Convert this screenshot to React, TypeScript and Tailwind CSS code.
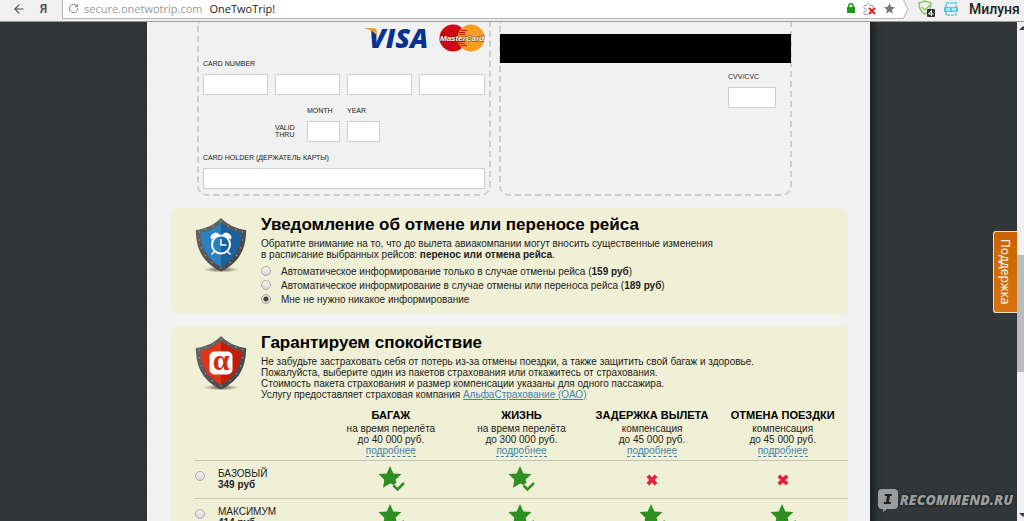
import { type ReactNode } from 'react'
import { ArrowLeft, RotateCw } from 'lucide-react'
import clsx from 'clsx'

interface Coverage {
  title: string
  lines: string[]
}

interface Plan {
  id: string
  name: string
  price: string
  covered: boolean[]
}

const coverages: Coverage[] = [
  { title: 'БАГАЖ', lines: ['на время перелёта', 'до 40 000 руб.'] },
  { title: 'ЖИЗНЬ', lines: ['на время перелёта', 'до 300 000 руб.'] },
  { title: 'ЗАДЕРЖКА ВЫЛЕТА', lines: ['компенсация', 'до 45 000 руб.'] },
  { title: 'ОТМЕНА ПОЕЗДКИ', lines: ['компенсация', 'до 45 000 руб.'] },
]

const plans: Plan[] = [
  { id: 'basic', name: 'БАЗОВЫЙ', price: '349 руб', covered: [true, true, false, false] },
  { id: 'max', name: 'МАКСИМУМ', price: '414 руб', covered: [true, true, true, true] },
]

const fieldClass = 'block w-full h-[21px] px-1 bg-white border border-[#cfcfcf] text-[11px] outline-none'
const labelClass = 'block text-[7px] leading-[8px] text-[#222]'
const radioClass =
  'appearance-none shrink-0 w-[10px] h-[10px] rounded-full border border-[#a9a9a9] bg-linear-to-b from-[#f4f4f4] to-[#d8d8d8] checked:bg-[radial-gradient(circle,#444_0_2px,#dedede_3px)]'

function VisaLogo() {
  return (
    <svg className="w-[68px] h-[28px] overflow-visible" viewBox="0 0 68 28" role="img" aria-label="Visa">
      <text x="6" y="24" className="font-['Open_Sans'] font-extrabold italic text-[27px]" fill="#0b3190">
        VISA
      </text>
      <path fill="#f79a1d" d="M2 4h8.500c1.500 0 2.300.7 2.600 2l1.400 7C12 8.500 8 6 2 4.600z" />
    </svg>
  )
}

function MasterCardLogo() {
  return (
    <svg className="w-[46px] h-[28px]" viewBox="0 0 46 28" role="img" aria-label="MasterCard">
      <circle cx="14" cy="14" r="13.500" fill="#cc0a12" />
      <circle cx="32" cy="14" r="13.500" fill="#f99d1c" />
      <path
        stroke="#cc0a12"
        strokeWidth="1"
        d="M22 6.500h6M20 8.500h6M20 10.500h6M19 17.500h7M20 19.500h6M22 21.500h6"
      />
      <text
        x="23"
        y="17"
        textAnchor="middle"
        className="font-['Liberation_Sans'] font-bold italic text-[8px]"
        fill="#fff"
        stroke="#6b1208"
        strokeWidth="0.800"
        paintOrder="stroke"
      >
        MasterCard
      </text>
    </svg>
  )
}

const studs: [number, number][] = [
  [26, 4.500], [18.500, 9], [11, 12.500], [4.500, 15], [4.500, 23], [6.500, 31], [10.500, 38.500], [17, 45.500], [26, 51],
  [33.500, 9], [41, 12.500], [47.500, 15], [47.500, 23], [45.500, 31], [41.500, 38.500], [35, 45.500],
]

function Shield({ tone, children }: { tone: 'blue' | 'red'; children: ReactNode }) {
  const [light, dark] = tone === 'blue' ? ['#2b80c0', '#19619d'] : ['#e0341a', '#c41c08']
  return (
    <svg className="shrink-0 w-[52px] h-[56px] mt-[2px]" viewBox="0 0 52 56" aria-hidden="true">
      <defs>
        <radialGradient id={`shade-${tone}`}>
          <stop offset="0" stopColor="#4a4634" stopOpacity="0.900" />
          <stop offset="1" stopColor="#4a4634" stopOpacity="0" />
        </radialGradient>
        <linearGradient id={`rim-${tone}`} x2="1" y2="1">
          <stop offset="0" stopColor="#6c6c6c" />
          <stop offset="1" stopColor="#3f3f42" />
        </linearGradient>
      </defs>
      <ellipse cx="26" cy="52.500" rx="18" ry="3" fill={`url(#shade-${tone})`} />
      <path
        fill={`url(#rim-${tone})`}
        d="M26 1C20 7 11 12 .8 13 1 30 6 45 26 54.500 46 45 51 30 51.200 13 41 12 32 7 26 1z"
      />
      <path fill={light} d="M26 6C20.500 10.500 14 14.500 5.500 16 6 30 11 41 26 50z" />
      <path fill={dark} d="M26 6c5.500 4.500 12 8.500 20.500 10C46 30 41 41 26 50z" />
      {studs.map(([cx, cy]) => (
        <circle key={`${cx}-${cy}`} cx={cx} cy={cy} r="0.700" fill="#a5a5a5" />
      ))}
      {children}
    </svg>
  )
}

function AlarmGlyph() {
  return (
    <g>
      <path fill="#fff" d="M16 22.500a5 5 0 0 1 8.500-5zM36 22.500a5 5 0 0 0-8.500-5z" />
      <circle cx="26" cy="27.500" r="9" fill="none" stroke="#fff" strokeWidth="2" />
      <path fill="none" stroke="#fff" strokeWidth="1.500" d="M26 22v6h5.500M19.500 34.500l-3 3M32.500 34.500l3 3" />
    </g>
  )
}

function AlfaGlyph() {
  return (
    <g>
      <rect x="14.500" y="16.500" width="23" height="23" rx="5" fill="#fff" />
      <text
        x="26"
        y="35"
        textAnchor="middle"
        className="font-['Liberation_Serif'] font-bold text-[30px]"
        fill="#d32a12"
      >
        α
      </text>
    </g>
  )
}

function CoveredIcon() {
  return (
    <svg className="w-[28px] h-[27px]" viewBox="0 0 28 27" role="img" aria-label="Включено">
      <path
        fill="#2f8f22"
        d="M13 0l3.400 7.500 8.100.5-6 5.700 1 2.800-2.700 2.500-3.600-1.500-7.200 4.300 1.300-8.100L1.500 8 9.700 7.500z"
      />
      <path fill="none" stroke="#2f8f22" strokeWidth="2.500" d="M16.500 19.500l4 4 6.500-6.500" />
    </svg>
  )
}

function NotCoveredIcon() {
  return (
    <svg className="w-[12px] h-[12px]" viewBox="0 0 12 12" role="img" aria-label="Не включено">
      <path
        fill="#e0263a"
        d="M.5 3.200 3.200.5 6 3.300 8.800.5l2.700 2.700L8.700 6l2.800 2.800-2.700 2.700L6 8.700l-2.800 2.800L.5 8.800 3.300 6z"
      />
    </svg>
  )
}

function Toolbar() {
  return (
    <header className="flex shrink-0 h-[22px] bg-[#f0f0f0] border-b border-[#999]">
      <div className="flex items-center gap-[14px] w-[62px] pl-3 pb-1">
        <button type="button" aria-label="Назад">
          <ArrowLeft className="w-[14px] h-[14px] text-[#555]" />
        </button>
        <button type="button" className="font-[Roboto] text-[12px] leading-[16px] font-bold text-[#555]">
          Я
        </button>
      </div>
      <div className="flex items-center grow h-[19px] pl-[5px] pr-2 pb-[2px] bg-white border-l border-b border-[#b5b5b5] text-[11px]">
        <button type="button" aria-label="Обновить">
          <RotateCw className="w-[11px] h-[11px] text-[#777]" />
        </button>
        <span className="ml-[5px] font-['Open_Sans'] text-[#999]">secure.onetwotrip.com</span>
        <span className="ml-[7px] font-['Open_Sans'] text-[#222]">OneTwoTrip!</span>
        <div className="flex items-center gap-2 ml-auto">
          <svg className="w-[8px] h-[10px]" viewBox="0 0 8 10" aria-hidden="true">
            <path fill="#1c9a1c" d="M0 4h8v6H0z" />
            <path fill="none" stroke="#1c9a1c" strokeWidth="1.500" d="M1.700 4.500V3a2.300 2.300 0 0 1 4.600 0v1.500" />
          </svg>
          <svg className="w-[13px] h-[13px]" viewBox="0 0 13 13" fill="none" aria-hidden="true">
            <path stroke="#aaa" d="M1 3.500h3c-1-3 4-3 3 0h3v3M1 3.500v3c3-1 3 4 0 3v3h4" />
            <path stroke="#d22" strokeWidth="2" d="m6 6 6 6M12 6l-6 6" />
          </svg>
          <svg className="w-[11px] h-[11px]" viewBox="0 0 12 12" aria-hidden="true">
            <path fill="#777" d="m6 0 1.700 4.200 4.300.3-3.300 2.800 1.100 4.500L6 9.300l-3.800 2.500 1.100-4.500L0 4.500l4.300-.3z" />
          </svg>
        </div>
      </div>
      <svg className="w-[6px] h-[19px]" viewBox="0 0 6 19" aria-hidden="true">
        <path fill="#fff" stroke="#b5b5b5" d="M0-1l5 10.500-5 9.500" />
      </svg>
      <div className="flex items-center w-[115px] h-[19px] pl-[9px] pb-[2px]">
        <svg className="w-[17px] h-[17px]" viewBox="0 0 17 17" aria-hidden="true">
          <path fill="none" stroke="#8cc56a" strokeWidth="1.500" d="M7 1 1 3c0 6 2 9 6 11 4-2 6-5 6-11zM4 7l3 3 5-5" />
          <rect x="9" y="9" width="8" height="8" rx="1" fill="#333" />
          <path stroke="#fff" fill="none" d="M13.500 16v-5.500l-3 3.500h5" />
        </svg>
        <svg className="w-[14px] h-[14px] ml-[9px]" viewBox="0 0 14 14" aria-hidden="true">
          <path fill="none" stroke="#59c5e6" strokeWidth="1.500" strokeDasharray="3 1" d="M2 1h10v12H2z" />
          <path fill="#59c5e6" d="M0 5h14v5H0z" />
          <path stroke="#fff" d="M3 6v3M5 6v3M9 6v3M11 6v3" />
        </svg>
        <span className="ml-[11px] font-[Roboto] text-[14px] leading-[18px] font-medium text-[#222]">Милуня</span>
      </div>
    </header>
  )
}

function CardFront() {
  return (
    <div className="h-[174px] px-1 border-2 border-t-0 border-dashed border-[#cdcdcd] rounded-b-[10px]">
      <div className="flex items-center justify-end gap-2 h-[28px] mt-[2px]">
        <VisaLogo />
        <MasterCardLogo />
      </div>
      <fieldset className="mt-2">
        <legend className={labelClass}>CARD NUMBER</legend>
        <div className="grid grid-cols-4 gap-[7px] mt-[6px]">
          {[1, 2, 3, 4].map((part) => (
            <input key={part} className={fieldClass} inputMode="numeric" maxLength={4} aria-label={`Card number ${part}`} />
          ))}
        </div>
      </fieldset>
      <div className="flex items-end gap-[7px] mt-3 pl-[72px]">
        <span className="w-[25px] pb-1 text-[7px] leading-[7px] text-[#222]">VALID THRU</span>
        <div className="w-[33px]">
          <label htmlFor="month" className={labelClass}>MONTH</label>
          <input id="month" className={clsx(fieldClass, 'mt-[6px]')} />
        </div>
        <div className="w-[33px]">
          <label htmlFor="year" className={labelClass}>YEAR</label>
          <input id="year" className={clsx(fieldClass, 'mt-[6px]')} />
        </div>
      </div>
      <label htmlFor="holder" className={clsx(labelClass, 'mt-3')}>CARD HOLDER (ДЕРЖАТЕЛЬ КАРТЫ)</label>
      <input id="holder" className={clsx(fieldClass, 'mt-[6px]')} />
    </div>
  )
}

function CardBack() {
  return (
    <div className="h-[174px] pt-3 border-2 border-t-0 border-dashed border-[#cdcdcd] rounded-b-[10px]">
      <div className="h-[29px] -mx-px bg-black" />
      <div className="w-[48px] mt-[10px] ml-auto mr-[14px]">
        <label htmlFor="cvv" className={labelClass}>CVV/CVC</label>
        <input id="cvv" className={clsx(fieldClass, 'mt-[6px]')} />
      </div>
    </div>
  )
}

interface PanelProps {
  title: string
  icon: ReactNode
  footer?: ReactNode
  children: ReactNode
}

function Panel({ title, icon, footer, children }: PanelProps) {
  return (
    <section className="mt-3 pt-[7px] pb-2 pl-6 bg-[#f0f0d6] rounded-lg">
      <div className="flex gap-[14px]">
        {icon}
        <div className="grow">
          <h2 className="text-[17px] leading-[20px] font-bold text-black">{title}</h2>
          {children}
        </div>
      </div>
      {footer}
    </section>
  )
}

function NotificationOption({ children, checked }: { children: ReactNode; checked?: boolean }) {
  return (
    <label className="flex items-center gap-[10px] h-[14px]">
      <input type="radio" name="notification" className={radioClass} defaultChecked={checked} />
      <span>{children}</span>
    </label>
  )
}

function PlanTable() {
  return (
    <table className="w-full mt-2 table-fixed border-collapse">
      <thead>
        <tr>
          <td />
          {coverages.map((item) => (
            <th key={item.title} scope="col" className="p-0 pb-[3px] font-normal">
              <div className="text-[11px] leading-[15px] font-bold text-black whitespace-nowrap">{item.title}</div>
              {item.lines.map((line) => (
                <div key={line}>{line}</div>
              ))}
              <a href="#details" className="inline-block text-[#4682a9] border-b border-dashed border-[#4682a9]">
                подробнее
              </a>
            </th>
          ))}
        </tr>
      </thead>
      <tbody>
        {plans.map((plan) => (
          <tr key={plan.id} className="h-[38px] border-t border-[#c6c6b4]">
            <th scope="row" className="p-0 pt-[7px] font-normal text-left align-top">
              <label className="flex items-start gap-[13px]">
                <input type="radio" name="plan" className={clsx(radioClass, 'mt-[3px]')} />
                <span>
                  {plan.name}
                  <b className="block">{plan.price}</b>
                </span>
              </label>
            </th>
            {plan.covered.map((covered, i) => (
              <td key={coverages[i].title} className="p-0">
                <div className="flex justify-center">{covered ? <CoveredIcon /> : <NotCoveredIcon />}</div>
              </td>
            ))}
          </tr>
        ))}
      </tbody>
    </table>
  )
}

function Scrollbar() {
  return (
    <div className="flex flex-col shrink-0 w-[7px] py-1 bg-[#f1f1f1] overflow-hidden" aria-hidden="true">
      <svg className="w-[7px] h-[4px]" viewBox="0 0 7 4">
        <path fill="#444" d="M2 4l4-4 4 4z" />
      </svg>
      <div className="h-[117px] mt-[225px] mb-auto bg-[#bcbcbc]" />
      <svg className="w-[7px] h-[4px]" viewBox="0 0 7 4">
        <path fill="#444" d="M2 0l4 4 4-4z" />
      </svg>
    </div>
  )
}

function Watermark() {
  return (
    <div className="absolute right-[4px] bottom-[9px] flex items-center gap-[2px] text-[#9b9c9d]">
      <svg className="w-[20px] h-[23px]" viewBox="0 0 20 23" aria-hidden="true">
        <path fill="currentColor" d="M4 0h12q4 0 4 4v12q0 4-4 4H9l-4 3v-3H4q-4 0-4-4V4q0-4 4-4z" />
        <path fill="#222" d="M7 5h7l-.4 2H12l-1 6h2l-.4 2h-7l.4-2h2l1-6H6.600z" />
      </svg>
      <span className="pb-[2px] font-['Open_Sans'] text-[14px] leading-[20px] font-extrabold italic [text-shadow:0_0_3px_#111]">
        RECOMMEND.RU
      </span>
    </div>
  )
}

export default function App() {
  return (
    <div className="flex flex-col h-screen overflow-hidden font-['Liberation_Sans',sans-serif] text-[10px] leading-[11px] text-[#222]">
      <Toolbar />
      <div className="flex grow min-h-0">
        <div className="relative grow overflow-hidden bg-[#313639] bg-[repeating-linear-gradient(0deg,#ffffff03_0_1px,transparent_1px_3px),repeating-linear-gradient(90deg,#00000008_0_1px,transparent_1px_4px)]">
          <main className="w-[723px] min-h-full mx-auto pl-6 pr-[22px] bg-[#f1f1f1] shadow-[4px_0_8px_0_#1a1c1e]">
            <div className="grid grid-cols-2 gap-2 pl-[26px] pr-[56px]">
              <CardFront />
              <CardBack />
            </div>
            <Panel title="Уведомление об отмене или переносе рейса" icon={<Shield tone="blue"><AlarmGlyph /></Shield>}>
              <p className="mt-[3px]">
                Обратите внимание на то, что до вылета авиакомпании могут вносить существенные изменения
                <br />
                в расписание выбранных рейсов: <b>перенос или отмена рейса</b>.
              </p>
              <div className="mt-1">
                <NotificationOption>
                  Автоматическое информирование только в случае отмены рейса (<b>159 руб</b>)
                </NotificationOption>
                <NotificationOption>
                  Автоматическое информирование в случае отмены или переноса рейса (<b>189 руб</b>)
                </NotificationOption>
                <NotificationOption checked>Мне не нужно никакое информирование</NotificationOption>
              </div>
            </Panel>
            <Panel
              title="Гарантируем спокойствие"
              icon={<Shield tone="red"><AlfaGlyph /></Shield>}
              footer={<PlanTable />}
            >
              <p className="mt-[3px]">
                Не забудьте застраховать себя от потерь из-за отмены поездки, а также защитить свой багаж и здоровье.
                <br />
                Пожалуйста, выберите один из пакетов страхования или откажитесь от страхования.
                <br />
                Стоимость пакета страхования и размер компенсации указаны для одного пассажира.
                <br />
                Услугу предоставляет страховая компания{' '}
                <a href="#alfa" className="text-[#4682a9] underline">АльфаСтрахование (ОАО)</a>
              </p>
            </Panel>
          </main>
          <button
            type="button"
            className="absolute right-0 top-[209px] h-[82px] w-[24px] flex items-center justify-center border border-r-0 border-[#f3dcc0] rounded-l-[3px] bg-linear-to-b from-[#c86400] to-[#d67412] text-white font-['Open_Sans'] text-[12px] [writing-mode:vertical-rl]"
          >
            Поддержка
          </button>
          <Watermark />
        </div>
        <Scrollbar />
      </div>
    </div>
  )
}
